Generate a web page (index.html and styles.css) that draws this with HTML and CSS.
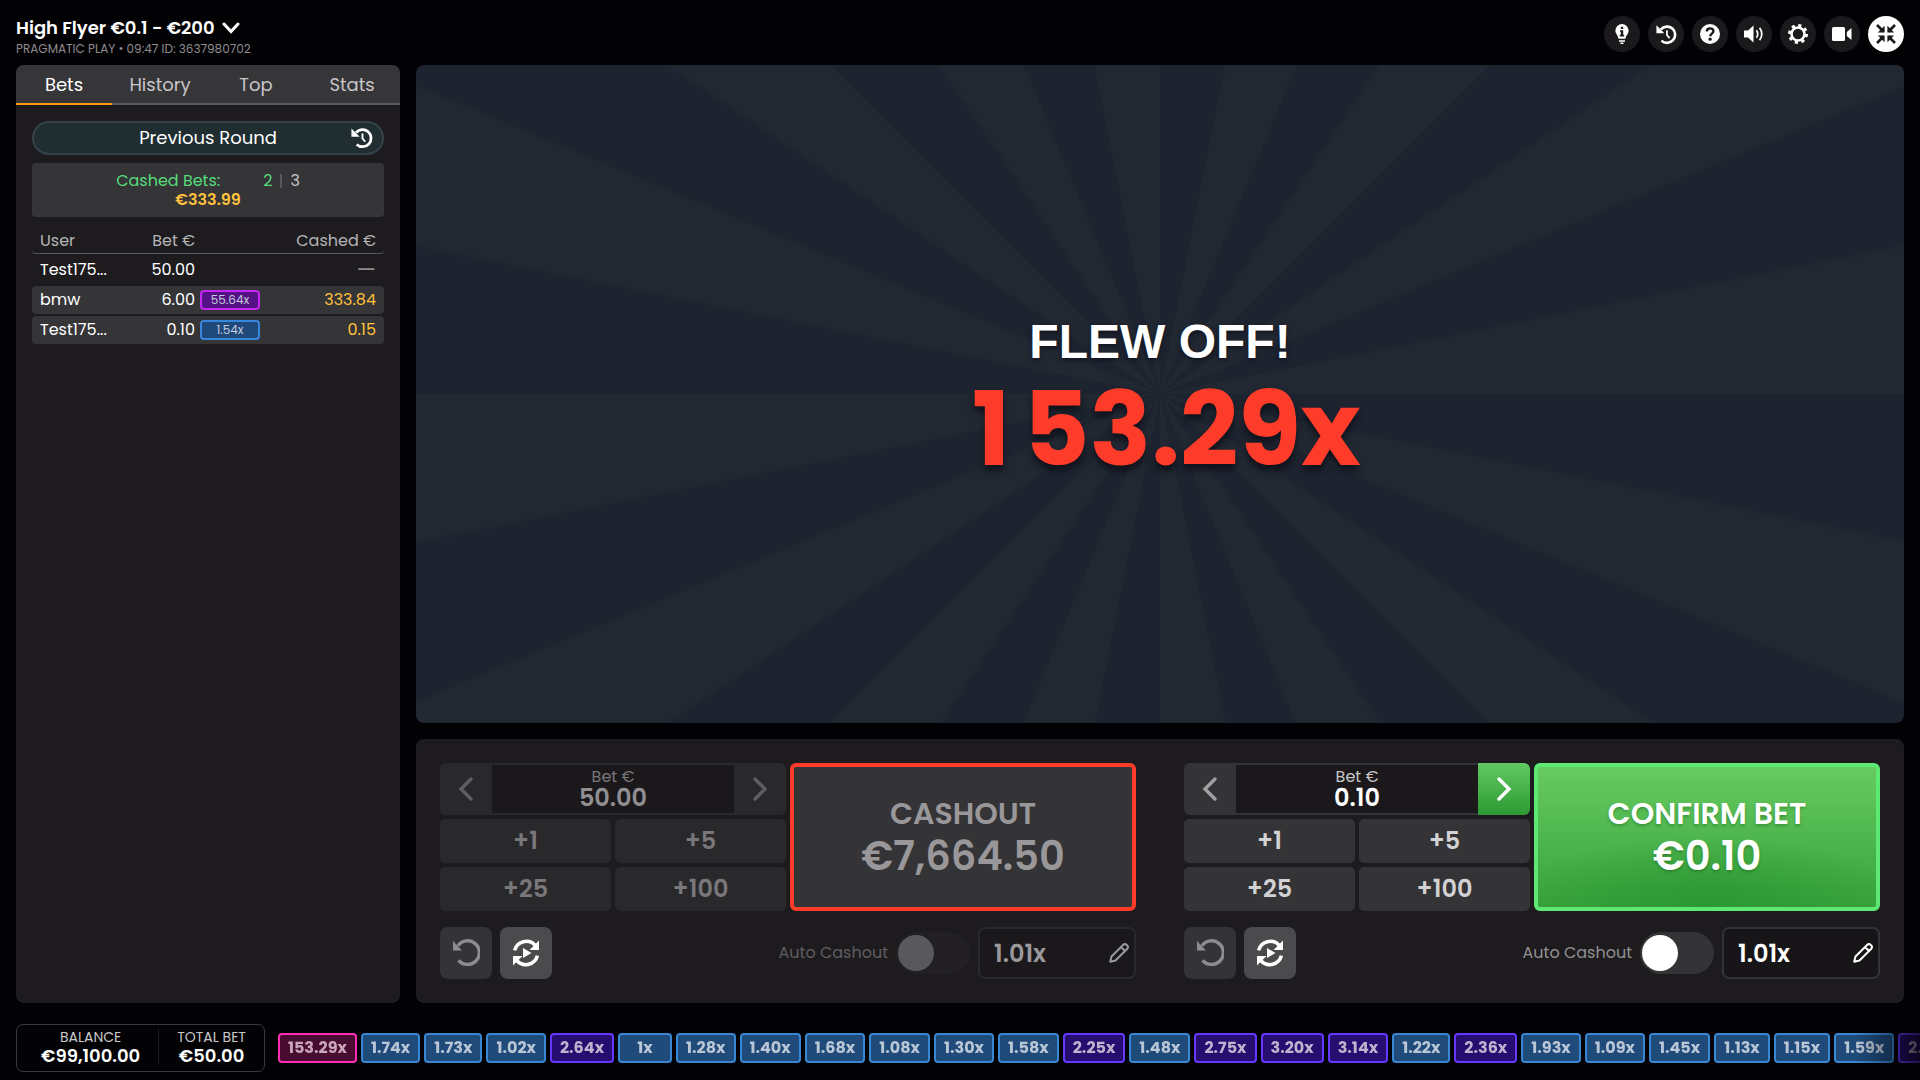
FILE: index.html
```html
<!DOCTYPE html>
<html lang="en">

	<head>
		<meta charset="UTF-8">
		<meta name="viewport" content="width=device-width, initial-scale=1">
		<title>High Flyer</title>
		<link rel="stylesheet" href="styles.css">
	</head>

	<body>

		<!-- shared icons -->
		<svg class="sprite" aria-hidden="true">
			<symbol id="i-history" viewBox="0 0 24 24">
				<path d="M5.5 6.2A9.3 9.3 0 1 1 6.2 19" fill="none" stroke="currentColor" stroke-width="3"/>
				<path d="M0.5 1.5v9h9z" fill="currentColor"/>
				<path d="M12.5 7v5.5l3 3.6" fill="none" stroke="currentColor" stroke-width="2"/>
			</symbol>
			<symbol id="i-undo" viewBox="0 0 28 28">
				<path d="M5 8.2A11.8 11.8 0 1 1 5.6 22.8" transform="translate(1 -1.5)" fill="none" stroke="currentColor" stroke-width="3.4"/>
				<path d="M1 2v9.5h9z" fill="currentColor"/>
			</symbol>
			<symbol id="i-repeat" viewBox="0 0 28 28">
				<path d="M2.6 11.4A12 12 0 0 1 23 6.2M25.4 16.6A12 12 0 0 1 5 21.8" fill="none" stroke="currentColor" stroke-width="3.6"/>
				<path d="M27 1.5v9.5h-9.5zM1 26.5V17h9.5zM11 9l8.5 5-8.5 5z" fill="currentColor"/>
			</symbol>
			<symbol id="i-pencil" viewBox="0 0 20 20">
				<path d="M1.2 18.8l1.3-5.3L14.3 1.7a2.2 2.2 0 0 1 3.2 0l.8.8a2.2 2.2 0 0 1 0 3.2L6.5 17.5zM12 4l4 4" fill="none" stroke="currentColor" stroke-width="2" stroke-linejoin="round"/>
			</symbol>
			<symbol id="i-left" viewBox="0 0 16 24">
				<path d="M13 2L3 12l10 10" fill="none" stroke="currentColor" stroke-width="3.4" stroke-linecap="round"/>
			</symbol>
			<symbol id="i-right" viewBox="0 0 16 24">
				<path d="M3 2l10 10L3 22" fill="none" stroke="currentColor" stroke-width="3.4" stroke-linecap="round"/>
			</symbol>
		</svg>

		<header class="top">
			<div class="game">
				<button type="button" class="game_name">High Flyer €0.1 - €200
					<svg width="18" height="12" viewBox="0 0 18 12"><path d="M2 2l7 7.5L16 2" fill="none" stroke="currentColor" stroke-width="3" stroke-linecap="round"/></svg>
				</button>
				<p class="game_info">PRAGMATIC PLAY • 09:47 ID: 3637980702</p>
			</div>
			<nav class="tools">
				<button type="button" class="tool" aria-label="Info">
					<svg width="20" height="20" viewBox="0 0 20 20"><path d="M10 0a6.6 6.6 0 0 0-6.6 6.6c0 3.4 2.4 4.4 3.2 8.2h6.8c.8-3.8 3.2-4.8 3.2-8.2A6.6 6.6 0 0 0 10 0z" fill="currentColor"/><path d="M7 17h6M8.5 19.2h3" stroke="currentColor" stroke-width="1.6"/><path d="M8.8 2.8h2.4V5H8.8zM8 6.2h3.2v4.6h1v1.6H7.8v-1.6h1V7.8H8z" fill="#1b191c"/></svg>
				</button>
				<button type="button" class="tool" aria-label="History"><svg width="21" height="21"><use href="#i-history"/></svg></button>
				<button type="button" class="tool" aria-label="Help">
					<svg width="20" height="20" viewBox="0 0 20 20"><circle cx="10" cy="10" r="10" fill="currentColor"/><path d="M6.8 7.4c0-4 6.6-4 6.6-.2 0 2.4-3.2 2.4-3.2 5" fill="none" stroke="#1b191c" stroke-width="2.4"/><circle cx="10.1" cy="15.2" r="1.6" fill="#1b191c"/></svg>
				</button>
				<button type="button" class="tool" aria-label="Sound">
					<svg width="20" height="20" viewBox="0 0 20 20"><path d="M0 6.5h4L9.5 1.5v17L4 13.5H0z" fill="currentColor"/><path d="M12.5 6.2q2.4 3.8 0 7.6M15.6 3.8q4.4 6.2 0 12.4" fill="none" stroke="currentColor" stroke-width="1.7"/></svg>
				</button>
				<button type="button" class="tool" aria-label="Settings">
					<svg width="20" height="20" viewBox="0 0 20 20"><circle cx="10" cy="10" r="8.2" fill="none" stroke="currentColor" stroke-width="3.6" stroke-dasharray="3 3.44" /><circle cx="10" cy="10" r="6.5" fill="none" stroke="currentColor" stroke-width="2.6"/></svg>
				</button>
				<button type="button" class="tool" aria-label="Video">
					<svg width="20" height="20" viewBox="0 0 20 20"><rect x="0" y="3" width="13" height="14" rx="1.5" fill="currentColor"/><path d="M14.8 8L19.5 4v12l-4.7-4z" fill="currentColor"/></svg>
				</button>
				<button type="button" class="tool tool-on" aria-label="Exit full screen">
					<svg width="20" height="20" viewBox="0 0 20 20"><path d="M1 1l6.5 6.5M19 1l-6.5 6.5M1 19l6.5-6.5M19 19l-6.5-6.5" stroke="currentColor" stroke-width="2.6"/><path d="M8.6 1.8v6.8H1.8zM11.4 1.8v6.8h6.8zM8.6 18.2v-6.8H1.8zM11.4 18.2v-6.8h6.8z" fill="currentColor"/></svg>
				</button>
			</nav>
		</header>

		<main class="main">
			<aside class="side">
				<div class="tabs">
					<button type="button" class="tab active">Bets</button>
					<button type="button" class="tab">History</button>
					<button type="button" class="tab">Top</button>
					<button type="button" class="tab">Stats</button>
				</div>
				<div class="side_body">
					<button type="button" class="prev">Previous Round<svg class="prev_icon" width="22" height="22"><use href="#i-history"/></svg></button>
					<div class="cashed">
						<p class="cashed_row"><span class="green">Cashed Bets:</span><span class="count"><span class="green">2</span><i class="bar"></i>3</span></p>
						<p class="cashed_sum">€333.99</p>
					</div>
					<table class="bets">
						<thead>
							<tr><th class="c_user">User</th><th class="c_bet">Bet €</th><th class="c_rate"></th><th class="c_cash">Cashed €</th></tr>
						</thead>
						<tbody>
							<tr><td>Test175...</td><td>50.00</td><td></td><td class="none">—</td></tr>
							<tr class="won"><td>bmw</td><td>6.00</td><td><span class="rate rate-pink">55.64x</span></td><td>333.84</td></tr>
							<tr class="won"><td>Test175...</td><td>0.10</td><td><span class="rate">1.54x</span></td><td>0.15</td></tr>
						</tbody>
					</table>
				</div>
			</aside>

			<div class="play">
				<section class="stage">
					<p class="stage_text">FLEW OFF!</p>
					<p class="stage_rate"><span class="stage_digit">1</span>53.29x</p>
				</section>

				<section class="controls">
					<form class="bet locked">
						<div class="pad">
							<div class="stepper">
								<button type="button" class="step" aria-label="Less" disabled><svg width="16" height="24"><use href="#i-left"/></svg></button>
								<label class="amount">Bet €<input type="text" value="50.00" disabled></label>
								<button type="button" class="step" aria-label="More" disabled><svg width="16" height="24"><use href="#i-right"/></svg></button>
							</div>
							<button type="button" class="add" disabled>+1</button>
							<button type="button" class="add" disabled>+5</button>
							<button type="button" class="add" disabled>+25</button>
							<button type="button" class="add" disabled>+100</button>
						</div>
						<button type="button" class="action"><span class="action_name">CASHOUT</span><span class="action_sum">€7,664.50</span></button>
						<div class="extra">
							<button type="button" class="square" aria-label="Undo"><svg width="28" height="28"><use href="#i-undo"/></svg></button>
							<button type="button" class="square square-on" aria-label="Autoplay"><svg width="28" height="28"><use href="#i-repeat"/></svg></button>
							<div class="auto">
								<label for="auto1">Auto Cashout</label>
								<input type="checkbox" class="switch" id="auto1" disabled>
								<label class="limit"><input type="text" value="1.01x" aria-label="Cashout at" disabled><svg width="20" height="20"><use href="#i-pencil"/></svg></label>
							</div>
						</div>
					</form>

					<form class="bet">
						<div class="pad">
							<div class="stepper">
								<button type="button" class="step" aria-label="Less"><svg width="16" height="24"><use href="#i-left"/></svg></button>
								<label class="amount">Bet €<input type="text" value="0.10"></label>
								<button type="button" class="step step-go" aria-label="More"><svg width="16" height="24"><use href="#i-right"/></svg></button>
							</div>
							<button type="button" class="add">+1</button>
							<button type="button" class="add">+5</button>
							<button type="button" class="add">+25</button>
							<button type="button" class="add">+100</button>
						</div>
						<button type="button" class="action action-go"><span class="action_name">CONFIRM BET</span><span class="action_sum">€0.10</span></button>
						<div class="extra">
							<button type="button" class="square" aria-label="Undo"><svg width="28" height="28"><use href="#i-undo"/></svg></button>
							<button type="button" class="square square-on" aria-label="Autoplay"><svg width="28" height="28"><use href="#i-repeat"/></svg></button>
							<div class="auto">
								<label for="auto2">Auto Cashout</label>
								<input type="checkbox" class="switch" id="auto2">
								<label class="limit"><input type="text" value="1.01x" aria-label="Cashout at"><svg width="20" height="20"><use href="#i-pencil"/></svg></label>
							</div>
						</div>
					</form>
				</section>
			</div>
		</main>

		<footer class="bottom">
			<dl class="wallet">
				<div class="wallet_item"><dt>BALANCE</dt><dd>€99,100.00</dd></div>
				<div class="wallet_item"><dt>TOTAL BET</dt><dd>€50.00</dd></div>
			</dl>
			<ul class="rounds">
				<li class="top_win">153.29x</li>
				<li>1.74x</li>
				<li>1.73x</li>
				<li>1.02x</li>
				<li class="high">2.64x</li>
				<li class="one">1x</li>
				<li>1.28x</li>
				<li>1.40x</li>
				<li>1.68x</li>
				<li>1.08x</li>
				<li>1.30x</li>
				<li>1.58x</li>
				<li class="high">2.25x</li>
				<li>1.48x</li>
				<li class="high">2.75x</li>
				<li class="high">3.20x</li>
				<li class="high">3.14x</li>
				<li>1.22x</li>
				<li class="high">2.36x</li>
				<li>1.93x</li>
				<li>1.09x</li>
				<li>1.45x</li>
				<li>1.13x</li>
				<li>1.15x</li>
				<li>1.59x</li>
				<li class="high">2.18x</li>
			</ul>
		</footer>

	</body>

</html>
```

FILE: styles.css
```css
* {
	margin: 0;
	padding: 0;
	box-sizing: border-box;
}
body {
	display: flex;
	flex-direction: column;
	min-height: 100vh;
	padding: 0 16px;
	overflow-x: hidden;
	background: #020104;
	color: #fff;
	font: 16px/20px Poppins, Inter, sans-serif;
}
button, input {
	border: 0;
	background: none;
	color: inherit;
	font: inherit;
}
button {
	display: flex;
	align-items: center;
	justify-content: center;
	cursor: pointer;
}
ul {
	list-style: none;
}
.sprite {
	position: absolute;
	width: 0;
	height: 0;
}

/* header */
.top {
	display: flex;
	justify-content: space-between;
	padding: 16px 0 10px;
}
.game_name {
	gap: 7px;
	font-size: 18px;
	line-height: 24px;
	font-weight: 600;
}
.game_info {
	color: #8e8c8f;
	font-size: 12px;
	line-height: 12px;
	padding-top: 3px;
}
.tools {
	display: flex;
	gap: 8px;
}
.tool {
	width: 36px;
	height: 36px;
	border-radius: 50%;
	background: #1b191c;
}
.tool-on {
	background: #fff;
	color: #1b191c;
}

/* left panel */
.main {
	flex: 1;
	display: grid;
	grid-template-columns: 384px 1fr;
	gap: 16px;
}
.side {
	border-radius: 8px;
	background: #1d1b1e;
	overflow: hidden;
}
.tabs {
	display: grid;
	grid-template-columns: repeat(4, 1fr);
	background: #363538;
}
.tab {
	height: 40px;
	padding-top: 2px;
	border-bottom: 2px solid #59585b;
	color: #c8c7c8;
	font-size: 18px;
}
.tab.active {
	border-color: #ff9c0c;
	color: #fff;
}
.side_body {
	padding: 16px;
}
.prev {
	position: relative;
	width: 100%;
	height: 34px;
	border: 2px solid #34434a;
	border-radius: 17px;
	background: #202e32;
	font-size: 18px;
}
.prev_icon {
	position: absolute;
	right: 9px;
}
.cashed {
	margin-top: 8px;
	padding: 8px 0;
	border-radius: 4px;
	background: #353437;
	text-align: center;
}
.cashed_row {
	display: flex;
	justify-content: center;
	gap: 43px;
	color: #c8c7c8;
}
.green {
	color: #55dc79;
}
.count {
	display: flex;
	align-items: center;
	gap: 8px;
}
.bar {
	width: 2px;
	height: 14px;
	background: #59585b;
}
.cashed_sum {
	color: #ffc23d;
	font-weight: 600;
	line-height: 18px;
}
.bets {
	width: 100%;
	margin-top: 8px;
	table-layout: fixed;
	border-collapse: separate;
	border-spacing: 0 2px;
	text-align: right;
}
.bets th {
	height: 27px;
	padding-top: 1px;
	border-bottom: 1px solid #59585b;
	color: #b5b4b6;
	font-weight: 400;
}
.bets td {
	height: 28px;
}
.bets th:first-child, .bets td:first-child {
	padding-left: 8px;
	border-radius: 4px 0 0 4px;
	text-align: left;
}
.bets th:last-child, .bets td:last-child {
	padding-right: 8px;
	border-radius: 0 4px 4px 0;
}
.c_user {
	width: 94px;
}
.c_bet {
	width: 69px;
}
.c_rate {
	width: 71px;
}
.bets .won td {
	background: #353437;
}
.bets .won td:last-child {
	color: #ffc23d;
}
.bets .none {
	color: #8e8c8f;
	font-size: 22px;
}
.rate {
	display: block;
	width: 60px;
	margin-left: 5px;
	border: 2px solid #3787dc;
	border-radius: 4px;
	background: #20497b;
	color: #c3cddb;
	font-size: 12px;
	line-height: 16px;
	text-align: center;
}
.rate-pink {
	border-color: #c526f4;
	background: #551186;
}

/* stage */
.play {
	display: flex;
	flex-direction: column;
	gap: 16px;
	min-width: 0;
}
.stage {
	flex: 1;
	display: flex;
	flex-direction: column;
	align-items: center;
	justify-content: center;
	padding-top: 16px;
	border-radius: 8px;
	background: repeating-conic-gradient(#1e2330 0deg 11deg, #222832 11.5deg 22.5deg);
	text-align: center;
}
.stage_text {
	font: bold 48px/56px "Liberation Sans", Arial, sans-serif;
	text-shadow: 0 2px 4px #10131c;
}
.stage_rate {
	color: #ff3b2a;
	font-size: 102px;
	line-height: 120px;
	font-weight: 700;
	text-shadow: 0 6px 6px #10131c;
}
.stage_digit {
	display: inline-block;
	width: 64px;
}

/* bet panels */
.controls {
	display: grid;
	grid-template-columns: 1fr 1fr;
	gap: 48px;
	padding: 24px;
	border-radius: 8px;
	background: #1d1b1e;
}
.bet {
	display: grid;
	grid-template-columns: 1fr 1fr;
	gap: 16px 4px;
}
.pad {
	display: grid;
	grid-template-columns: 1fr 1fr;
	grid-template-rows: 52px 44px 44px;
	gap: 4px;
}
.stepper {
	grid-column: 1 / 3;
	display: flex;
	border-radius: 6px;
	background: #343336;
	overflow: hidden;
}
.step {
	flex: 0 0 52px;
	color: #a09fa1;
}
.step-go {
	background: linear-gradient(#62c962, #2c9933);
	color: #fff;
}
.amount {
	flex: 1;
	display: flex;
	flex-direction: column;
	align-items: center;
	min-width: 0;
	margin: 2px 0;
	padding-top: 2px;
	background: #1a181b;
	color: #c8c7c8;
	line-height: 20px;
}
.amount input {
	width: 100%;
	height: 20px;
	color: #fff;
	font-size: 24px;
	font-weight: 600;
	text-align: center;
}
.add {
	border-radius: 5px;
	background: #343336;
	color: #d2d1d3;
	font-size: 24px;
	font-weight: 600;
}
.action {
	flex-direction: column;
	padding-bottom: 4px;
	border: 4px solid #ff3b2a;
	border-radius: 6px;
	background: #343336;
	color: #999799;
	font-weight: 600;
}
.action-go {
	border-color: #5de873;
	background: radial-gradient(ellipse 60% 50% at 50% 100%, #2c9833, transparent), linear-gradient(#66cb61, #38a23c);
	color: #fff;
	text-shadow: 0 2px 3px rgba(0, 60, 0, .3);
}
.action_name {
	font-size: 30px;
	line-height: 42px;
}
.action_sum {
	font-size: 40px;
	line-height: 42px;
}
.extra {
	grid-column: 1 / 3;
	display: flex;
	gap: 8px;
}
.square {
	width: 52px;
	height: 52px;
	border-radius: 8px;
	background: #343336;
	color: #8e8c8f;
}
.square-on {
	background: #4b4a4d;
	color: #fff;
}
.auto {
	flex: 1;
	display: flex;
	align-items: center;
	justify-content: flex-end;
	gap: 8px;
	color: #929093;
}
.switch {
	appearance: none;
	width: 74px;
	height: 42px;
	padding: 3px 2px;
	border-radius: 21px;
	background: #343336;
}
.switch::before {
	content: "";
	display: block;
	width: 36px;
	height: 36px;
	border-radius: 50%;
	background: #fff;
}
.limit {
	display: flex;
	align-items: center;
	width: 158px;
	height: 52px;
	padding: 0 5px 0 14px;
	border: 2px solid #343336;
	border-radius: 7px;
	background: #171518;
	color: #fff;
}
.limit input {
	flex: 1;
	min-width: 0;
	font-size: 24px;
	font-weight: 600;
}

/* round is running, bet can't be changed */
.locked .stepper, .locked .add {
	background: #29282b;
	color: #79777a;
}
.locked .step {
	color: #5f5d60;
}
.locked .amount {
	color: #79777a;
}
.locked .amount input {
	color: #908e91;
}
.locked .auto {
	color: #5f5d60;
}
.locked .switch {
	background: #222023;
}
.locked .switch::before {
	background: #59585b;
}
.locked .limit {
	border-color: #29282b;
	background: #1a181b;
	color: #9a989b;
}

/* footer */
.bottom {
	display: flex;
	align-items: center;
	gap: 13px;
	margin-right: -16px;
	padding: 21px 0 8px;
}
.wallet {
	flex: none;
	display: flex;
	padding: 3px 0 6px;
	border: 1px solid #3a393c;
	border-radius: 7px;
	line-height: 19px;
	text-align: center;
}
.wallet_item {
	padding: 0 18px;
}
.wallet_item:first-child {
	padding-left: 24px;
	border-right: 1px solid #1d1b1e;
}
.wallet dt {
	color: #c8c7c8;
	font-size: 14px;
}
.wallet dd {
	font-size: 18px;
	line-height: 18px;
	font-weight: 600;
}
.rounds {
	flex: 1;
	display: flex;
	gap: 4px;
	min-width: 0;
	overflow: hidden;
	-webkit-mask-image: linear-gradient(to left, rgba(0, 0, 0, .3), #000 64px);
	mask-image: linear-gradient(to left, rgba(0, 0, 0, .3), #000 64px);
}
.rounds li {
	flex: none;
	padding: 0 8px;
	border: 2px solid #3787d2;
	border-radius: 4px;
	background: #204a7a;
	color: #b9c6d6;
	line-height: 26px;
	font-weight: 700;
	text-align: center;
}
.rounds .one {
	min-width: 54px;
}
.rounds .high {
	border-color: #6638ff;
	background: #260d70;
	color: #beb2cf;
}
.rounds .top_win {
	border-color: #ff2cb4;
	background: #480c30;
	color: #caa6ba;
}
```
